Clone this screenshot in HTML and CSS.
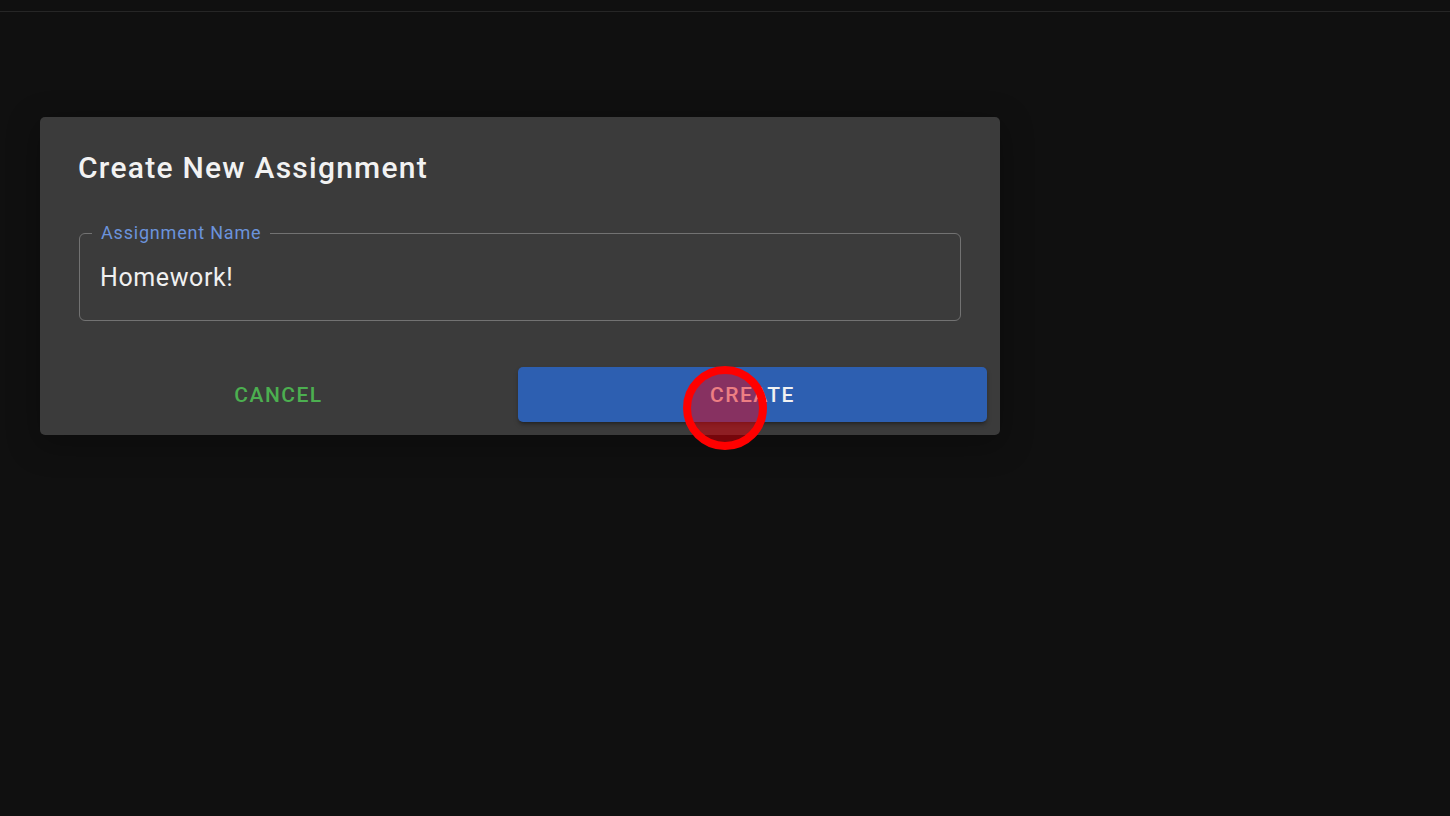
FILE: index.html
```html
<!DOCTYPE html>
<html lang="en">
<head>
    <meta charset="UTF-8">
    <meta name="viewport" content="width=device-width, initial-scale=1.0">
    <link rel="stylesheet" href="styles.css">
    <title>Create New Assignment</title>
</head>
<body>
    <div class="top-bar"></div>
    <div class="page">
        <div class="dialog">
            <h2 class="dialog-title">Create New Assignment</h2>
            <div class="field">
                <span class="field-label">Assignment Name</span>
                <div class="field-value">Homework!</div>
            </div>
            <div class="actions">
                <button class="btn btn-cancel">Cancel</button>
                <button class="btn btn-create">Create</button>
            </div>
        </div>
    </div>
    <div class="click-marker"></div>
</body>
</html>
```

FILE: styles.css
```css
body {
    margin: 0;
    background-color: #101010;
    color: #fff;
    font-family: Roboto, "Liberation Sans", sans-serif;
    height: 816px;
    overflow: hidden;
    position: relative;
}

.top-bar {
    height: 11px;
    border-bottom: 1px solid #262626;
}

.page {
    padding: 105px 0 0 40px;
}

.dialog {
    width: 960px;
    box-sizing: border-box;
    background-color: #3b3b3b;
    border-radius: 5px;
    padding: 33px 13px 13px 4px;
    box-shadow: 0 8px 30px 4px rgba(0, 0, 0, 0.25);
}

.dialog-title {
    margin: 0 0 47px 34px;
    font-size: 30px;
    font-weight: 500;
    line-height: 36px;
    letter-spacing: 1.25px;
    color: #f2f2f2;
}

.field {
    position: relative;
    margin: 0 26px 0 35px;
    height: 88px;
    box-sizing: border-box;
    border: 1.5px solid #727272;
    border-radius: 6px;
    display: flex;
    align-items: center;
    padding: 0 20px;
}

.field-label {
    position: absolute;
    top: -12px;
    left: 12px;
    padding: 0 9px;
    background-color: #3b3b3b;
    color: #6b93dc;
    font-size: 18px;
    line-height: 22px;
    letter-spacing: 0.8px;
}

.field-value {
    font-size: 25px;
    letter-spacing: 0.6px;
    color: #f0f0f0;
    padding-top: 1px;
}

.actions {
    display: grid;
    grid-template-columns: 1fr 1fr;
    gap: 5px;
    margin-top: 46px;
}

.btn {
    height: 55px;
    border: none;
    border-radius: 5px;
    font-family: Roboto, "Liberation Sans", sans-serif;
    font-size: 21px;
    font-weight: 500;
    letter-spacing: 0.07em;
    text-transform: uppercase;
    cursor: pointer;
}

.btn-cancel {
    background: none;
    color: #4caf50;
}

.btn-create {
    background-color: #2d5fb1;
    color: #f2f2f2;
    box-shadow: 0 3px 3px -2px rgba(0, 0, 0, 0.3), 0 3px 5px rgba(0, 0, 0, 0.2);
}

.click-marker {
    position: absolute;
    left: 683px;
    top: 366px;
    width: 84px;
    height: 84px;
    box-sizing: border-box;
    border: 8px solid #f00;
    border-radius: 50%;
    background-color: rgba(235, 0, 10, 0.48);
}
```
